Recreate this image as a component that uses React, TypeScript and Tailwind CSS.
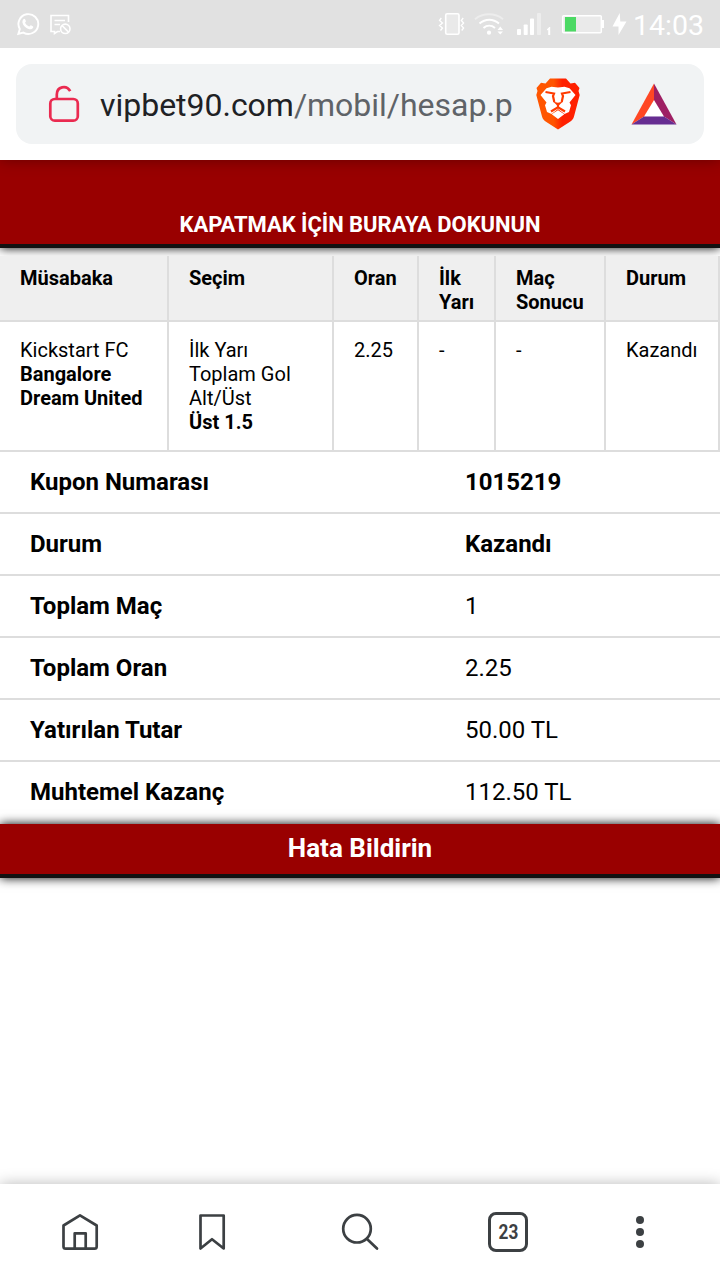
import type { ReactNode } from 'react';

interface Selection {
  league: string;
  teams: string[];
  market: string[];
  pick: string;
  odds: string;
  firstHalf: string;
  fullTime: string;
  status: string;
}

interface SummaryRow {
  label: string;
  value: string;
  strong?: boolean;
}

const selections: Selection[] = [
  {
    league: 'Kickstart FC',
    teams: ['Bangalore', 'Dream United'],
    market: ['İlk Yarı', 'Toplam Gol', 'Alt/Üst'],
    pick: 'Üst 1.5',
    odds: '2.25',
    firstHalf: '-',
    fullTime: '-',
    status: 'Kazandı',
  },
];

const summary: SummaryRow[] = [
  { label: 'Kupon Numarası', value: '1015219', strong: true },
  { label: 'Durum', value: 'Kazandı', strong: true },
  { label: 'Toplam Maç', value: '1' },
  { label: 'Toplam Oran', value: '2.25' },
  { label: 'Yatırılan Tutar', value: '50.00 TL' },
  { label: 'Muhtemel Kazanç', value: '112.50 TL' },
];

const columns = 'grid grid-cols-[169px_165px_85px_77px_110px_114px]';

function StatusBar() {
  return (
    <div className="relative z-20 flex h-12 items-center justify-between bg-[#e1e1e1] px-4 text-white">
      <div className="flex items-center gap-[10px]">
        <svg className="h-6 w-6" viewBox="0 0 24 24" fill="none">
          <path d="M2.3 22 3.8 17A9.9 9.9 0 1 1 7.4 20.6Z" stroke="currentColor" strokeWidth="1.9" />
          <path
            d="M7.2 7.400c.8-1 1.700-.8 2 0l.7 1.700c.2.6-.8 1.300-.8 1.700.7 1.600 2.300 3 4 3.700.6.2 1.200-1.500 1.800-1.200l1.900.9c.7.4.5 1.300.1 1.900-.8 1.100-2.300 1.500-3.700 1.100-3.300-.9-6-3.300-6.700-6.500-.2-1.200 0-2.400.7-3.300Z"
            fill="currentColor"
          />
        </svg>
        <svg className="h-6 w-6" viewBox="0 0 24 24" fill="none" stroke="currentColor">
          <path d="M18.500 10V3.500H1V19.500h3.500V21.500l3-2h2.500" strokeWidth="1.600" />
          <path d="M4.500 8.500h10.500M4.500 12.500h5.500" strokeWidth="1.400" />
          <circle cx="15.300" cy="16.800" r="4.700" strokeWidth="1.600" />
          <path d="m12 13.500 6.600 6.600" strokeWidth="1.600" />
        </svg>
      </div>
      <div className="flex items-center">
        <svg className="h-6 w-[28px]" viewBox="0 0 28 24" fill="none" stroke="currentColor">
          <rect x="7.700" y="1.700" width="13.300" height="20.600" rx="1.500" fill="#e9e9e9" strokeWidth="1.600" />
          <path d="M3.300 6 1.500 8.500l3 2.500-3 2.500 3 2.500-2 2.500M25.200 6l-1.900 2.500 2.300 2.500-2.300 2.500 2.300 2.500-1.900 2.500" strokeWidth="1.300" />
        </svg>
        <svg className="ml-2 h-6 w-[30px]" viewBox="0 0 30 24" fill="none" stroke="currentColor">
          <path d="M1 7.200C9 .7 21 .7 29 7.200" strokeWidth="2" opacity=".4" />
          <path d="M5.500 11.500c6-5 13.500-5 19.500 0M9.500 16c3.500-3 8-3 11.500 0" strokeWidth="2" />
          <circle cx="15" cy="20.700" r="2.100" fill="currentColor" stroke="none" />
          <path d="m23.500 18 2.800-3.500L29 18ZM23.500 19.500h5.500L26.300 22.500Z" fill="currentColor" stroke="none" />
        </svg>
        <svg className="ml-[12px] h-6 w-[36px]" viewBox="0 0 36 24" fill="currentColor">
          <rect x="1" y="17" width="4" height="6" rx=".8" />
          <rect x="7.700" y="12.500" width="4" height="10.500" rx=".8" />
          <rect x="14" y="6.500" width="4" height="16.500" rx=".8" />
          <rect x="21" y="1" width="4" height="22" rx=".8" opacity=".4" />
          <path d="M31 17.300 33.300 15h.9v8h-2v-5.200l-1.200.7Z" />
        </svg>
        <svg className="ml-[9px] h-6 w-[44px]" viewBox="0 0 44 24" fill="none">
          <rect x="1.700" y="3.700" width="38.600" height="17" rx="1" fill="#eaeaea" stroke="currentColor" strokeWidth="1.500" />
          <rect x="4" y="5" width="11" height="14.500" fill="#4cd964" />
          <path d="M40.500 8H43v8h-2.500Z" fill="currentColor" />
        </svg>
        <svg className="ml-[7px] h-6 w-4" viewBox="0 0 16 24" fill="currentColor">
          <path d="M7.700 1 .5 14.500H6.500V23L14.500 9.500H8.300Z" />
        </svg>
        <span className="ml-[5px] pt-1 text-[28.500px] leading-none">14:03</span>
      </div>
    </div>
  );
}

function AddressBar() {
  return (
    <div className="relative z-10 h-28 bg-white p-4 shadow-[0_0_14px_rgba(0,0,0,0.35)]">
      <div className="flex h-20 items-center rounded-2xl bg-[#f1f3f4] pl-8 pr-[26px]">
        <svg className="h-10 w-8 shrink-0" viewBox="0 0 32 40" fill="none" stroke="#ea2a50" strokeWidth="2.700">
          <rect x="2.300" y="15" width="27.500" height="21.700" rx="4.500" />
          <path d="M8.800 15v-4.500c0-8 9.700-10 13.400-3.300" />
        </svg>
        <div className="ml-5 w-[414px] overflow-hidden whitespace-nowrap pt-[2px] text-[32px] leading-10 tracking-[-0.02px] text-[#5f6368]">
          <span className="text-[#202124]">vipbet90.com</span>/mobil/hesap.p
        </div>
        <svg className="ml-[22px] mb-px h-[52px] w-[44px] shrink-0" viewBox="0 0 44 52">
          <defs>
            <linearGradient id="brave" x1="0" x2="1">
              <stop offset="0.400" stopColor="#ff5500" />
              <stop offset="0.600" stopColor="#ff2000" />
            </linearGradient>
          </defs>
          <path
            d="M14 .5h16l4.500 5 4.500-.7 4.500 5.200-1 3 1.200 4-5.700 21.500c-.7 2.500-2 4-4 5.300L22 51.500l-12-7.700c-2-1.300-3.300-2.800-4-5.300L.3 17l1.200-4-1-3L5 4.800l4.500.7Z"
            fill="url(#brave)"
          />
          <path
            d="M22 9.500 15.500 8.700 10.500 10.300 4.500 17l6 7.500-1.500 2.800 2 6.700 4.500 2L22 31l6.500 5 4.500-2 2-6.700-1.500-2.800L39.500 17l-6-6.700-5-1.600ZM22 32.300l-6.300 4L22 41l6.300-4.700Z"
            fill="#fff"
          />
          <path
            d="M9.500 14 18 15.500 17 18 18.300 24M34.500 14 26 15.500 27 18 25.700 24M22 26V29.700M15 33.500 22 29.300 29 33.500"
            fill="none"
            stroke="#ff3b00"
            strokeWidth="2.200"
          />
          <path d="M17 23.500 22 24.800 27 23.500 22 28.300Z" fill="#ff3b00" />
        </svg>
        <svg className="ml-[51px] h-[42px] w-[46px] shrink-0" viewBox="0 0 46 42">
          <path d="m23 17-10 16.500h20Z" fill="#fff" />
          <path d="M23 .5V17L13 33.500.5 41.500Z" fill="#ff4724" />
          <path d="M23 .5V17l10 16.500 12.500 8Z" fill="#9e1f63" />
          <path d="M.5 41.500 13 33.500h20l12.500 8Z" fill="#662d91" />
        </svg>
      </div>
    </div>
  );
}

function Cell({ children, header = false }: { children: ReactNode; header?: boolean }) {
  return (
    <div
      className={`border-b-2 border-r-2 border-[#ddd] pl-5 ${
        header ? 'h-[66px] bg-[#efefef] pt-[10px] font-bold' : 'h-[130px] bg-white pt-4'
      }`}
    >
      {children}
    </div>
  );
}

function CouponTable() {
  return (
    <div className="relative z-[1] mt-2 text-[20px] leading-6">
      <div className={columns}>
        <Cell header>Müsabaka</Cell>
        <Cell header>Seçim</Cell>
        <Cell header>Oran</Cell>
        <Cell header>İlk<br />Yarı</Cell>
        <Cell header>Maç<br />Sonucu</Cell>
        <Cell header>Durum</Cell>
      </div>
      {selections.map((s) => (
        <div key={s.league} className={columns}>
          <Cell>
            <div>{s.league}</div>
            {s.teams.map((team) => (
              <div key={team} className="font-bold">{team}</div>
            ))}
          </Cell>
          <Cell>
            {s.market.map((line) => (
              <div key={line}>{line}</div>
            ))}
            <div className="font-bold">{s.pick}</div>
          </Cell>
          <Cell>{s.odds}</Cell>
          <Cell>{s.firstHalf}</Cell>
          <Cell>{s.fullTime}</Cell>
          <Cell>{s.status}</Cell>
        </div>
      ))}
    </div>
  );
}

function BottomNav() {
  return (
    <nav className="flex h-24 items-center bg-white text-[#3c4043] shadow-[0_0_14px_rgba(0,0,0,0.28)]">
      <svg className="ml-[60px] h-10 w-10" viewBox="0 0 40 40" fill="none" stroke="currentColor" strokeWidth="2.700" strokeLinejoin="round">
        <path d="M20 3.300 3.500 13.500V34.500q0 2.200 2.200 2.200H34.500q2.200 0 2.200-2.200V13.500Z" />
        <path d="M14.700 36.500V21.300h11V36.500" />
      </svg>
      <svg className="ml-[92px] h-10 w-10" viewBox="0 0 40 40" fill="none" stroke="currentColor" strokeWidth="2.700" strokeLinejoin="round">
        <path d="M8.500 3.500h23.200V36.500L20 27.200 8.500 36.500Z" />
      </svg>
      <svg className="ml-[108px] h-10 w-10" viewBox="0 0 40 40" fill="none" stroke="currentColor" strokeWidth="2.700" strokeLinecap="round">
        <circle cx="17" cy="16.700" r="13.800" />
        <path d="m27 27 10 9.500" />
      </svg>
      <div className="ml-[108px] flex h-10 w-10 items-center justify-center rounded-[8px] border-[3px] border-current text-[20px] font-bold">
        <span className="scale-x-[0.86]">23</span>
      </div>
      <div className="ml-[108px] flex flex-col gap-1">
        <span className="h-2 w-2 rounded-full bg-current" />
        <span className="h-2 w-2 rounded-full bg-current" />
        <span className="h-2 w-2 rounded-full bg-current" />
      </div>
    </nav>
  );
}

export default function App() {
  return (
    <div className="flex h-[1280px] w-[720px] flex-col overflow-hidden bg-white font-['Roboto',sans-serif] text-black">
      <StatusBar />
      <AddressBar />
      <main className="flex-1 text-[24px]">
        <button className="flex h-[88px] w-full items-end justify-center border-b-4 border-[#111] bg-[#990000] pb-[5px] text-[22px] font-bold leading-7 tracking-[-0.04px] text-white shadow-[0_0_10px_#000]">
          KAPATMAK İÇİN BURAYA DOKUNUN
        </button>
        <CouponTable />
        {summary.map((row) => (
          <div key={row.label} className="flex h-[62px] items-center border-b-2 border-[#ddd] pl-[30px] last-of-type:border-white">
            <span className="w-[435px] font-bold">{row.label}</span>
            <span className={row.strong ? 'font-bold' : ''}>{row.value}</span>
          </div>
        ))}
        <button className="relative block h-[54px] w-full border-b-4 border-[#111] bg-[#990000] pb-[2px] text-[26px] font-bold leading-[48px] text-white shadow-[0_0_10px_#000]">
          Hata Bildirin
        </button>
      </main>
      <BottomNav />
    </div>
  );
}
